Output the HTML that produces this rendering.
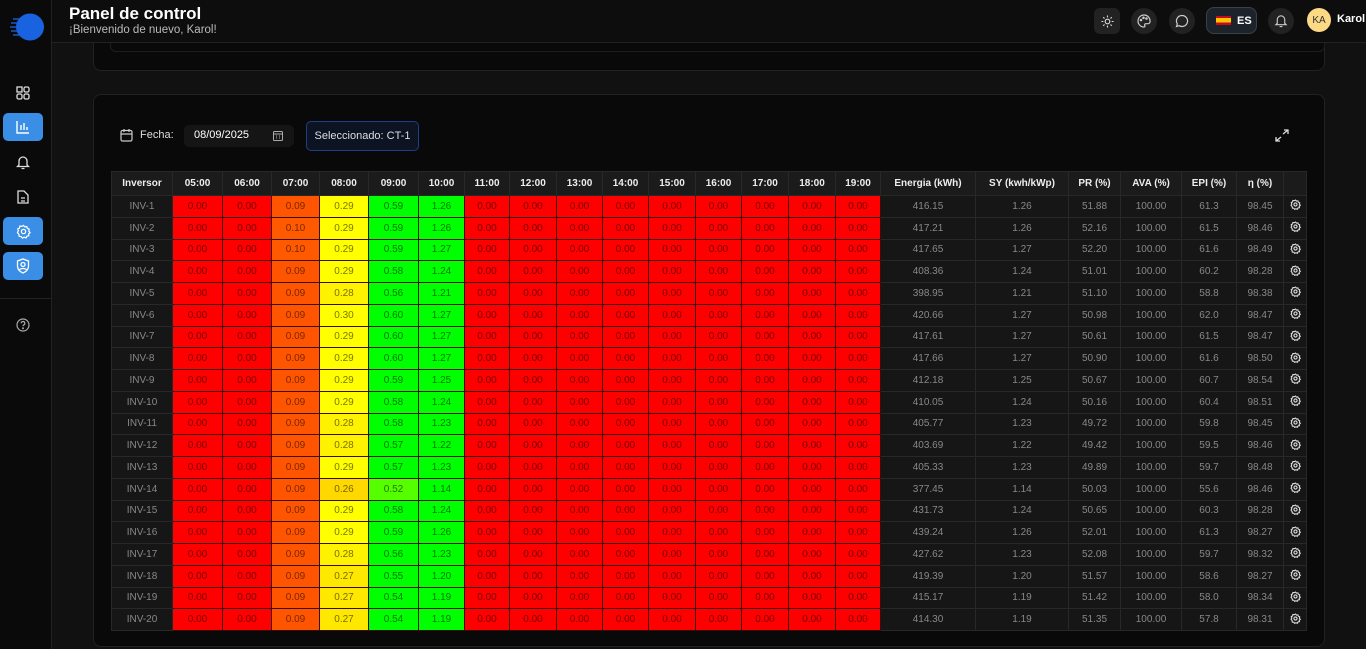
<!DOCTYPE html>
<html><head><meta charset="utf-8">
<style>
*{box-sizing:border-box;margin:0;padding:0}
body{width:1366px;height:649px;overflow:hidden;background:#111;font-family:"Liberation Sans",sans-serif;color:#fff;position:relative}
.side{position:absolute;left:0;top:0;width:52px;height:649px;background:#0a0a0a;border-right:1px solid #222;z-index:5}
.hdr{position:absolute;left:52px;top:0;right:0;height:43px;background:#0d0d0d;border-bottom:1px solid #222;z-index:5}
.sb{position:absolute;left:3px;width:40px;height:28px;border-radius:5px;display:flex;align-items:center;justify-content:center}
.sb.a{background:#3a8ee6}
.ic{position:absolute;width:26px;height:26px;border-radius:50%;background:#222;display:flex;align-items:center;justify-content:center}
table{border-collapse:collapse;position:absolute;left:111px;top:171px;font-size:10px;table-layout:fixed}
td,th{height:21.75px;text-align:center;border:1px solid #282828;padding:0}
th{height:24px;background:#1b1b1b;font-weight:bold;color:#eee;font-size:10px}
td{background:#161616;color:#888}
td.c{color:rgba(0,0,0,.55);border-color:#3a0d0d}
</style></head><body>
<div class="side">
 <svg style="position:absolute;left:9px;top:13px" width="36" height="28" viewBox="0 0 36 28"><ellipse cx="21" cy="14" rx="14" ry="13.5" fill="#1a63e0"/><g stroke="#1a63e0" stroke-width="1.3"><line x1="1" y1="14" x2="8" y2="14"/><line x1="2" y1="10" x2="9" y2="10"/><line x1="2" y1="18" x2="9" y2="18"/><line x1="4" y1="6" x2="10" y2="6"/><line x1="4" y1="22" x2="10" y2="22"/></g></svg>
 <svg style="position:absolute;left:16px;top:86px" width="14" height="14" viewBox="0 0 14 14" fill="none" stroke="#ddd" stroke-width="1.3"><rect x="1" y="1" width="5" height="5"/><rect x="8" y="1" width="5" height="5" rx="1.5"/><rect x="1" y="8" width="5" height="5" rx="1.5"/><rect x="8" y="8" width="5" height="5" rx="1.5"/></svg>
 <div class="sb a" style="top:113px"><svg width="14" height="14" viewBox="0 0 14 14" fill="none" stroke="#fff" stroke-width="1.4"><path d="M1 1v12h12M5 5v5M8 3v7M11 7v3"/></svg></div>
 <svg style="position:absolute;left:16px;top:155px" width="14" height="15" viewBox="0 0 14 15" fill="none" stroke="#ddd" stroke-width="1.3"><path d="M3 10V6a4 4 0 0 1 8 0v4l1.5 1.5h-11zM5.5 13.5h3"/></svg>
 <svg style="position:absolute;left:17px;top:190px" width="12" height="14" viewBox="0 0 12 14" fill="none" stroke="#ddd" stroke-width="1.3"><path d="M1 1h6l4 4v8H1zM4 8h4M4 11h4"/></svg>
 <div class="sb a" style="top:217px"><svg width="15" height="15" viewBox="0 0 16 16" fill="none" stroke="#fff" stroke-width="1.3"><circle cx="8" cy="8" r="2.3"/><path d="M8 1.5l1.4 1.6 2.1-.4.6 2 2 .8-.5 2.1 1.4 1.6-1.6 1.3.3 2.1-2.1.4-.9 1.9-2-.8-1.9 1-1.3-1.7-2.1-.2-.3-2.1L1.5 9l1.1-1.8-.8-2 1.9-.9.5-2.1 2.1.3z"/></svg></div>
 <div class="sb a" style="top:252px"><svg width="14" height="16" viewBox="0 0 14 16" fill="none" stroke="#fff" stroke-width="1.3"><path d="M7 1l5.5 2v5c0 3.5-2.5 5.8-5.5 7-3-1.2-5.5-3.5-5.5-7V3z"/><circle cx="7" cy="6.5" r="2"/><path d="M3.5 12c1-2 6-2 7 0"/></svg></div>
 <div style="position:absolute;left:0;top:298px;width:52px;border-top:1px solid #222"></div>
 <svg style="position:absolute;left:16px;top:318px" width="14" height="14" viewBox="0 0 14 14" fill="none" stroke="#aaa" stroke-width="1.2"><circle cx="7" cy="7" r="6"/><path d="M5.2 5.3a1.8 1.8 0 1 1 2.4 1.7c-.5.2-.6.6-.6 1.2"/><circle cx="7" cy="10.3" r=".4" fill="#aaa"/></svg>
</div>
<div class="hdr">
 <div style="position:absolute;left:17px;top:4px;font-size:17px;font-weight:bold">Panel de control</div>
 <div style="position:absolute;left:17px;top:24px;font-size:11.5px;color:#bbb">¡Bienvenido de nuevo, Karol!</div>
 <div class="ic" style="left:1042px;top:8px;border-radius:6px"><svg width="13" height="13" viewBox="0 0 14 14" fill="none" stroke="#ddd" stroke-width="1.2"><circle cx="7" cy="7" r="2.5"/><path d="M7 0.5v2M7 11.5v2M0.5 7h2M11.5 7h2M2.4 2.4l1.4 1.4M10.2 10.2l1.4 1.4M2.4 11.6l1.4-1.4M10.2 3.8l1.4-1.4"/></svg></div>
 <div class="ic" style="left:1079px;top:8px"><svg width="14" height="14" viewBox="0 0 14 14" fill="none" stroke="#ccc" stroke-width="1.2"><path d="M7 1a6 6 0 0 0 0 12c1 0 1.3-.8.8-1.5-.5-.8 0-1.8 1-1.8H11a2 2 0 0 0 2-2A6 6 0 0 0 7 1z"/><circle cx="4" cy="6" r=".7"/><circle cx="6.5" cy="3.8" r=".7"/><circle cx="9.5" cy="4.5" r=".7"/></svg></div>
 <div class="ic" style="left:1117px;top:8px"><svg width="14" height="14" viewBox="0 0 14 14" fill="none" stroke="#ccc" stroke-width="1.2"><path d="M7 1.5a5.5 5.5 0 1 1-2.8 10.2L1.5 12.5l.8-2.6A5.5 5.5 0 0 1 7 1.5z"/></svg></div>
 <div style="position:absolute;left:1154px;top:7px;width:51px;height:27px;border-radius:8px;background:#1d232b;border:1px solid #3a414a;display:flex;align-items:center;padding-left:9px;gap:6px"><span style="width:15px;height:9px;background:linear-gradient(#c60b1e 25%,#ffc400 25% 75%,#c60b1e 75%)"></span><b style="font-size:11px">ES</b></div>
 <div class="ic" style="left:1216px;top:8px"><svg width="14" height="14" viewBox="0 0 14 15" fill="none" stroke="#ccc" stroke-width="1.2"><path d="M3 10V6a4 4 0 0 1 8 0v4l1.5 1.5h-11zM5.5 13.5h3"/></svg></div>
 <div style="position:absolute;left:1255px;top:8px;width:24px;height:24px;border-radius:50%;background:#fbd985;color:#333;font-size:10px;display:flex;align-items:center;justify-content:center">KA</div>
 <div style="position:absolute;left:1285px;top:13px;font-size:11px;font-weight:bold">Karol</div>
</div>
<div style="position:absolute;left:93px;top:30px;width:1232px;height:41px;background:#090909;border:1px solid #222;border-top:none;border-radius:0 0 8px 8px"></div>
<div style="position:absolute;left:110px;top:30px;width:1215px;height:22px;border:1px solid #1e1e1e;border-top:none;border-radius:0 0 6px 6px"></div>
<div style="position:absolute;left:93px;top:94px;width:1232px;height:553px;background:#090909;border:1px solid #222;border-radius:8px"></div>
<svg style="position:absolute;left:120px;top:128px" width="13" height="14" viewBox="0 0 13 14" fill="none" stroke="#ccc" stroke-width="1.2"><rect x="1" y="2.5" width="11" height="10.5" rx="1.5"/><path d="M1 6h11M4 1v3M9 1v3"/></svg>
<div style="position:absolute;left:140px;top:129px;font-size:11px;color:#ddd">Fecha:</div>
<div style="position:absolute;left:184px;top:125px;width:110px;height:22px;background:#151515;border-radius:5px;font-size:11px;padding:4px 10px">08/09/2025<svg style="position:absolute;left:89px;top:6px" width="10" height="10" viewBox="0 0 10 10" fill="none" stroke="#aaa"><rect x=".5" y=".5" width="9" height="9" rx="1"/><path d="M.5 3h9M3 5h1M6 5h1M3 7h1M6 7h1"/></svg></div>
<div style="position:absolute;left:306px;top:121px;width:113px;height:30px;background:#0c1424;border:1px solid #1f3e8a;border-radius:5px;font-size:11px;display:flex;align-items:center;justify-content:center;color:#ddd">Seleccionado: CT-1</div>
<svg style="position:absolute;left:1275px;top:129px" width="14" height="13" viewBox="0 0 14 13" fill="none" stroke="#ddd" stroke-width="1.3"><path d="M8 5l5-4M9 1h4v4M6 8l-5 4M1 8v4h4"/></svg>
<table id="t"></table>
<script>
var w=[61,50,49,48,49,50,46,45,47,46,46,47,46,47,47,45,95,93,52,61,55,47,23];
var d=[
[.09,.29,.59,1.26,"416.15","1.26","51.88","61.3","98.45"],[.10,.29,.59,1.26,"417.21","1.26","52.16","61.5","98.46"],[.10,.29,.59,1.27,"417.65","1.27","52.20","61.6","98.49"],[.09,.29,.58,1.24,"408.36","1.24","51.01","60.2","98.28"],[.09,.28,.56,1.21,"398.95","1.21","51.10","58.8","98.38"],[.09,.30,.60,1.27,"420.66","1.27","50.98","62.0","98.47"],[.09,.29,.60,1.27,"417.61","1.27","50.61","61.5","98.47"],[.09,.29,.60,1.27,"417.66","1.27","50.90","61.6","98.50"],[.09,.29,.59,1.25,"412.18","1.25","50.67","60.7","98.54"],[.09,.29,.58,1.24,"410.05","1.24","50.16","60.4","98.51"],[.09,.28,.58,1.23,"405.77","1.23","49.72","59.8","98.45"],[.09,.28,.57,1.22,"403.69","1.22","49.42","59.5","98.46"],[.09,.29,.57,1.23,"405.33","1.23","49.89","59.7","98.48"],[.09,.26,.52,1.14,"377.45","1.14","50.03","55.6","98.46"],[.09,.29,.58,1.24,"431.73","1.24","50.65","60.3","98.28"],[.09,.29,.59,1.26,"439.24","1.26","52.01","61.3","98.27"],[.09,.28,.56,1.23,"427.62","1.23","52.08","59.7","98.32"],[.09,.27,.55,1.20,"419.39","1.20","51.57","58.6","98.27"],[.09,.27,.54,1.19,"415.17","1.19","51.42","58.0","98.34"],[.09,.27,.54,1.19,"414.30","1.19","51.35","57.8","98.31"]];
var h=["Inversor"];for(var i=5;i<=19;i++)h.push((i<10?"0":"")+i+":00");h=h.concat(["Energia (kWh)","SY (kwh/kWp)","PR (%)","AVA (%)","EPI (%)","η (%)",""]);
function col(v){if(v==0)return"#ff0000";if(v<.2)return v>=.1?"#ff5a00":"#ff5500";if(v<.4){return v>=.29?"#ffff00":v>=.28?"#fff200":v>=.27?"#ffe800":"#ffd800";}if(v<.53&&v<1)return"#55ff00";return"#00ff00";}
var g='<svg width="11" height="11" viewBox="0 0 16 16" fill="none" stroke="#ddd" stroke-width="1.6"><circle cx="8" cy="8" r="2.3"/><path d="M8 1.5l1.4 1.6 2.1-.4.6 2 2 .8-.5 2.1 1.4 1.6-1.6 1.3.3 2.1-2.1.4-.9 1.9-2-.8-1.9 1-1.3-1.7-2.1-.2-.3-2.1L1.5 9l1.1-1.8-.8-2 1.9-.9.5-2.1 2.1.3z"/></svg>';
var s='<colgroup>'+w.map(function(x){return'<col style="width:'+x+'px">'}).join('')+'</colgroup><tr>'+h.map(function(x){return'<th>'+x+'</th>'}).join('')+'</tr>';
d.forEach(function(r,k){var hv=[0,0,r[0],r[1],r[2],r[3],0,0,0,0,0,0,0,0,0];s+='<tr><td>INV-'+(k+1)+'</td>';hv.forEach(function(v){s+='<td class="c" style="background:'+col(v)+'">'+v.toFixed(2)+'</td>'});s+='<td>'+r[4]+'</td><td>'+r[5]+'</td><td>'+r[6]+'</td><td>100.00</td><td>'+r[7]+'</td><td>'+r[8]+'</td><td style="color:#ddd">'+g+'</td></tr>'});
document.getElementById('t').innerHTML=s;
</script>
</body></html>
